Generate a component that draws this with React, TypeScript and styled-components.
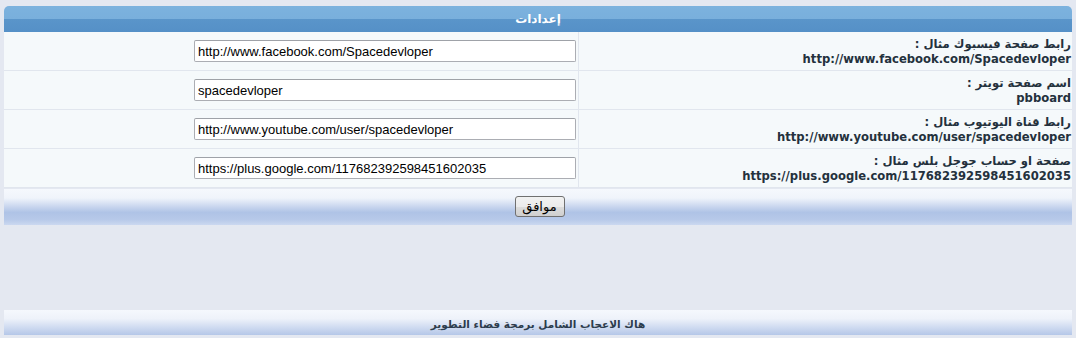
import styled, { createGlobalStyle } from "styled-components";

const GlobalStyle = createGlobalStyle`
  body {
    margin: 0;
    background: #e4e8f1;
    font-family: "DejaVu Sans", Tahoma, sans-serif;
  }
`;

const Page = styled.div`
  direction: rtl;
  padding: 6px 4px 0 4px;
  height: 332px;
  display: flex;
  flex-direction: column;
`;

const Panel = styled.div`
  display: flex;
  flex-direction: column;
`;

const PanelHeader = styled.div`
  height: 26px;
  border-radius: 5px 5px 0 0;
  background: linear-gradient(#7cb2de 0%, #79afdc 50%, #5a95ca 50%, #5590c7 100%);
  color: #fff;
  font-weight: bold;
  font-size: 12px;
  display: flex;
  align-items: center;
  justify-content: center;
`;

const Row = styled.div`
  display: grid;
  grid-template-columns: 494px 1fr;
  height: 38px;
  border-bottom: 1px solid #e1e6ee;
  background: #f5f9fb;
`;

const LabelCell = styled.div`
  border-left: 1px solid #e1e6ee;
  padding: 5px 1px 0 0;
  font-size: 11.6px;
  font-weight: bold;
  line-height: 15px;
  color: #24313d;
`;

const Example = styled.div`
  direction: ltr;
  text-align: right;
`;

const InputCell = styled.div`
  display: flex;
  align-items: center;
  padding-right: 2px;
`;

const TextInput = styled.input`
  direction: ltr;
  width: 382px;
  height: 22px;
  box-sizing: border-box;
  border: 1px solid #abadb3;
  border-top-color: #9fa2a8;
  border-radius: 2px;
  padding: 0 4px 0 3px;
  font-family: "Liberation Sans", Arial, sans-serif;
  font-size: 13px;
  color: #000;
  background: #fff;
  outline: none;
`;

const ActionBar = styled.div`
  margin-top: 1px;
  height: 36px;
  background: linear-gradient(
    #f5f8fd 0%,
    #f0f4fb 25%,
    #c7d5ee 50%,
    #afc3e6 65%,
    #b7c9e9 85%,
    #cbd8f0 100%
  );
  display: flex;
  align-items: center;
  justify-content: center;
`;

const Button = styled.button`
  width: 50px;
  height: 21px;
  margin-top: -1px;
  margin-left: 3px;
  border: 1px solid #707070;
  border-radius: 3px;
  background: linear-gradient(#f2f2f2 0%, #ebebeb 50%, #dddddd 50%, #cfcfcf 100%);
  font-family: "DejaVu Sans", Tahoma, sans-serif;
  font-size: 13px;
  color: #000;
  padding: 0;
`;

const Spacer = styled.div`
  flex: 1;
`;

const Footer = styled.div`
  height: 25px;
  margin-bottom: 3px;
  background: linear-gradient(#f5f8fd 0%, #eef2fa 35%, #d3def2 65%, #b5c7e8 100%);
  display: flex;
  align-items: center;
  justify-content: center;
  font-size: 10.5px;
  font-weight: bold;
  color: #2d3d4d;
  padding-top: 2px;
  box-sizing: border-box;
`;

const fields = [
  {
    label: "رابط صفحة فيسبوك مثال :",
    example: "http://www.facebook.com/Spacedevloper",
    value: "http://www.facebook.com/Spacedevloper",
  },
  {
    label: "اسم صفحة تويتر :",
    example: "pbboard",
    value: "spacedevloper",
  },
  {
    label: "رابط قناة اليوتيوب مثال :",
    example: "http://www.youtube.com/user/spacedevloper",
    value: "http://www.youtube.com/user/spacedevloper",
  },
  {
    label: "صفحة او حساب جوجل بلس مثال :",
    example: "https://plus.google.com/117682392598451602035",
    value: "https://plus.google.com/117682392598451602035",
  },
];

export default function App() {
  return (
    <>
      <GlobalStyle />
      <Page>
        <Panel>
          <PanelHeader>إعدادات</PanelHeader>
          {fields.map((field) => (
            <Row key={field.label}>
              <LabelCell>
                <div>{field.label}</div>
                <Example>{field.example}</Example>
              </LabelCell>
              <InputCell>
                <TextInput defaultValue={field.value} />
              </InputCell>
            </Row>
          ))}
          <ActionBar>
            <Button>موافق</Button>
          </ActionBar>
        </Panel>
        <Spacer />
        <Footer>هاك الاعجاب الشامل برمجة فضاء التطوير</Footer>
      </Page>
    </>
  );
}
